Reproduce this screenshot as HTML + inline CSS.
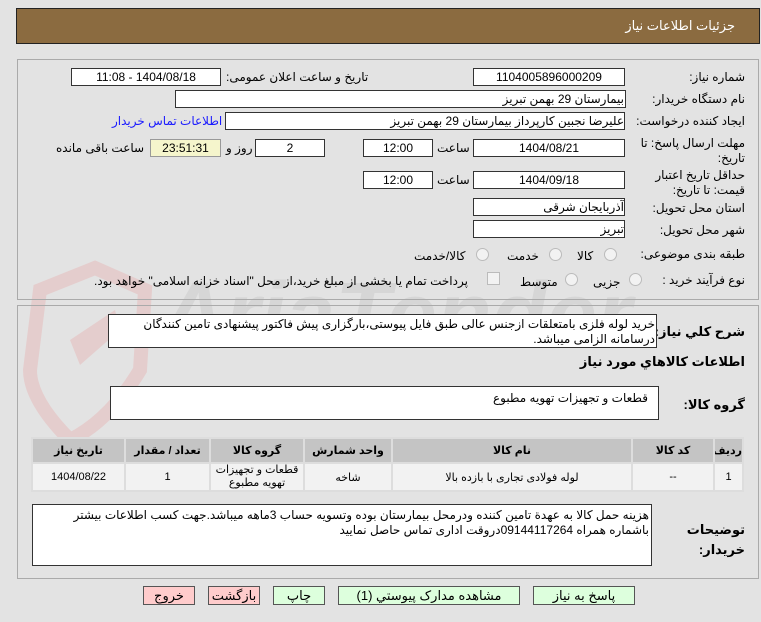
<!DOCTYPE html>
<html><head><meta charset="utf-8"><style>
body{margin:0;width:761px;height:622px;background:#e3e3e3;font-family:"Liberation Sans","DejaVu Sans",sans-serif;font-size:12px;color:#000;position:relative;overflow:hidden}
.a{position:absolute}
.hdr{left:16px;top:8px;width:742px;height:34px;background:#8b6b40;border:1px solid #222;color:#fff;font-size:13px}
.pn{border:1px solid #aaa;background:transparent}
.box{position:absolute;background:#fff;border:1px solid #333;height:16px;line-height:16px;direction:rtl;box-sizing:content-box;white-space:nowrap;overflow:hidden}
.c{text-align:center}
.l{direction:rtl;white-space:nowrap}
.btn{position:absolute;top:586px;height:17px;line-height:17px;border:1px solid #555;text-align:center;font-size:13px}
.g{background:#ddffdd}.p{background:#ffcccc}
table{border-collapse:separate;border-spacing:2px;background:#ddd;table-layout:fixed}
td,th{text-align:center;font-size:11px;padding:0;overflow:hidden}
th{background:#c4c4c4;height:23px}
td{background:#f2f2f2;height:26px}
.rad{position:absolute;width:11px;height:11px;border:1px solid #bbb;border-radius:50%;background:#f2f2f2}
</style></head><body>
<svg class="a" style="left:0;top:240px" width="640" height="220" opacity=".45">
<path d="M40 50 L95 28 L145 50 L140 130 Q110 180 70 200 Q30 160 30 130Z" fill="none" stroke="#e6b4b4" stroke-width="14"/>
<path d="M70 100 L115 70 L120 90 L80 125Z" fill="#e6b4b4"/>
<text x="160" y="105" font-family="Liberation Sans" font-weight="bold" font-style="italic" font-size="90" fill="#c8c8c8">AriaTender.net</text>
</svg>
<div class="a hdr"><span class="a" style="right:24px;top:9px">جزئیات اطلاعات نیاز</span></div>
<div class="a pn" style="left:17px;top:59px;width:740px;height:239px"></div>
<div class="a pn" style="left:17px;top:305px;width:740px;height:272px"></div>

<span class="a l" style="right:16px;top:70px">شماره نیاز:</span>
<div class="box c" style="left:473px;top:68px;width:150px">1104005896000209</div>
<span class="a l" style="left:226px;top:70px">تاریخ و ساعت اعلان عمومی:</span>
<div class="box c" style="left:71px;top:68px;width:148px">1404/08/18 - 11:08</div>

<span class="a l" style="right:16px;top:92px">نام دستگاه خریدار:</span>
<div class="box" style="left:175px;top:90px;width:448px;padding-right:1px">بیمارستان 29 بهمن تبریز</div>

<span class="a l" style="right:16px;top:114px">ایجاد کننده درخواست:</span>
<div class="box" style="left:225px;top:112px;width:398px">علیرضا نجبین کارپرداز بیمارستان 29 بهمن تبریز</div>
<span class="a l" style="left:112px;top:114px;color:#1a1aff">اطلاعات تماس خریدار</span>

<span class="a l" style="right:16px;top:136px;line-height:15px;text-align:right">مهلت ارسال پاسخ: تا<br>تاریخ:</span>
<div class="box c" style="left:473px;top:139px;width:150px">1404/08/21</div>
<span class="a l" style="left:437px;top:141px">ساعت</span>
<div class="box c" style="left:363px;top:139px;width:68px">12:00</div>
<div class="box c" style="left:255px;top:139px;width:68px">2</div>
<span class="a l" style="left:226px;top:141px">روز و</span>
<div class="box c" style="left:150px;top:139px;width:69px;background:#f5f5cc;border-color:#999">23:51:31</div>
<span class="a l" style="left:56px;top:141px">ساعت باقی مانده</span>

<span class="a l" style="right:16px;top:168px;line-height:15px;text-align:right">حداقل تاریخ اعتبار<br>قیمت: تا تاریخ:</span>
<div class="box c" style="left:473px;top:171px;width:150px">1404/09/18</div>
<span class="a l" style="left:437px;top:173px">ساعت</span>
<div class="box c" style="left:363px;top:171px;width:68px">12:00</div>

<span class="a l" style="right:16px;top:201px">استان محل تحویل:</span>
<div class="box" style="left:473px;top:198px;width:150px">آذربایجان شرقی</div>
<span class="a l" style="right:16px;top:223px">شهر محل تحویل:</span>
<div class="box" style="left:473px;top:220px;width:150px">تبریز</div>

<span class="a l" style="right:16px;top:247px">طبقه بندی موضوعی:</span>
<div class="rad" style="left:604px;top:248px"></div><span class="a l" style="left:577px;top:249px">کالا</span>
<div class="rad" style="left:549px;top:248px"></div><span class="a l" style="left:507px;top:249px">خدمت</span>
<div class="rad" style="left:476px;top:248px"></div><span class="a l" style="left:414px;top:249px">کالا/خدمت</span>

<span class="a l" style="right:16px;top:273px">نوع فرآیند خرید :</span>
<div class="rad" style="left:629px;top:273px"></div><span class="a l" style="left:593px;top:275px">جزیی</span>
<div class="rad" style="left:565px;top:273px"></div><span class="a l" style="left:520px;top:275px">متوسط</span>
<div class="a" style="left:487px;top:272px;width:11px;height:11px;border:1px solid #bbb;background:#f2f2f2"></div>
<span class="a l" style="left:94px;top:274px">پرداخت تمام یا بخشی از مبلغ خرید،از محل "اسناد خزانه اسلامی" خواهد بود.</span>

<span class="a l" style="right:16px;top:324px;font-weight:bold;font-size:13px">شرح کلي نياز:</span>
<div class="box" style="left:108px;top:314px;width:549px;line-height:15px;white-space:normal;padding:2px 1px 0 0;box-sizing:border-box;height:34px">خرید لوله فلزی بامتعلقات ازجنس عالی طبق فایل پیوستی،بارگزاری پیش فاکتور پیشنهادی تامین کنندگان درسامانه الزامی میباشد.</div>

<span class="a l" style="right:16px;top:354px;font-weight:bold;font-size:13px">اطلاعات کالاهاي مورد نياز</span>
<span class="a l" style="right:16px;top:397px;font-weight:bold;font-size:13px">گروه کالا:</span>
<div class="box" style="left:110px;top:386px;width:549px;line-height:14px;padding:4px 10px 0 0;box-sizing:border-box;height:34px">قطعات و تجهیزات تهویه مطبوع</div>

<table class="a" style="left:31px;top:437px;width:713px;direction:rtl">
<tr><th style="width:27px">ردیف</th><th style="width:80px">کد کالا</th><th>نام کالا</th><th style="width:86px">واحد شمارش</th><th style="width:92px">گروه کالا</th><th style="width:83px">تعداد / مقدار</th><th style="width:91px">تاریخ نیاز</th></tr>
<tr><td>1</td><td>--</td><td>لوله فولادی تجاری با بازده بالا</td><td>شاخه</td><td style="line-height:13px">قطعات و تجهیزات<br>تهویه مطبوع</td><td>1</td><td>1404/08/22</td></tr>
</table>

<span class="a l" style="right:16px;top:520px;font-weight:bold;font-size:13px;line-height:20px;text-align:right">توضیحات<br>خریدار:</span>
<div class="box" style="left:32px;top:504px;width:620px;line-height:15px;white-space:normal;padding:3px 2px 0 40px;box-sizing:border-box;height:62px">هزینه حمل کالا به عهدة تامین کننده ودرمحل بیمارستان بوده وتسویه حساب 3ماهه میباشد.جهت کسب اطلاعات بیشتر باشماره همراه 09144117264دروقت اداری تماس حاصل نمایید</div>

<div class="btn p" style="left:143px;width:50px">خروج</div>
<div class="btn p" style="left:208px;width:50px">بازگشت</div>
<div class="btn g" style="left:273px;width:50px">چاپ</div>
<div class="btn g" style="left:338px;width:180px">مشاهده مدارک پیوستي (1)</div>
<div class="btn g" style="left:533px;width:100px">پاسخ به نياز</div>
</body></html>
